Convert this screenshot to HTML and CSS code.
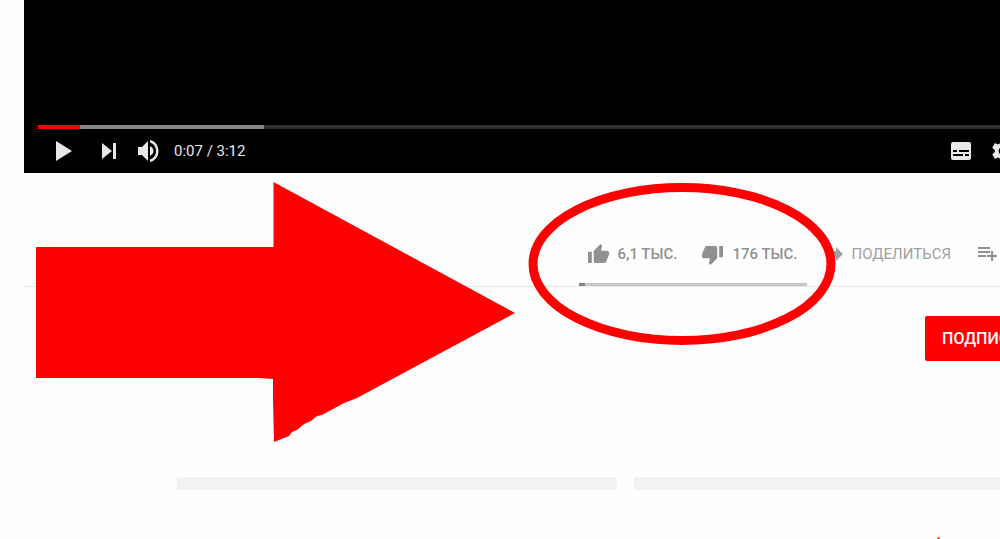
FILE: index.html
```
<!DOCTYPE html>
<html lang="ru">
<head>
    <meta charset="UTF-8">
    <title>Видео</title>
    <link rel="stylesheet" href="styles.css">
</head>
<body>
<div class="player">
    <input type="range" class="player-progress" min="0" max="192" value="7" aria-label="Перемотка">
    <div class="player-controls">
        <button type="button" class="icon-btn btn-play" aria-label="Смотреть">
            <svg width="16" height="20" viewBox="0 0 16 20"><path d="M0 0L16 10L0 20z"/></svg>
        </button>
        <button type="button" class="icon-btn btn-next" aria-label="Следующее">
            <svg width="14" height="16" viewBox="0 0 14 16"><path d="M0 0L10 8L0 16zM11 0h3v16h-3z"/></svg>
        </button>
        <button type="button" class="icon-btn btn-volume" aria-label="Звук">
            <svg width="21" height="22" viewBox="0 0 21 22"><path d="M0 7v8h4l6 6V1L4 7zM12 6v10c2-1 3.500-2.800 3.500-5S14 7 12 6zM12 0v2.500c3.500 1 6 4.400 6 8.500s-2.500 7.500-6 8.500V22c5-1 8.500-5.500 8.500-11S17 1 12 0z"/></svg>
        </button>
        <span class="player-time">0:07 / 3:12</span>
        <div class="player-right">
            <button type="button" class="icon-btn" aria-label="Субтитры">
                <svg width="20" height="18" viewBox="0 0 20 18"><path fill-rule="evenodd" d="M2 0h16a2 2 0 0 1 2 2v14a2 2 0 0 1-2 2H2a2 2 0 0 1-2-2V2a2 2 0 0 1 2-2zM2 8v2h4V8zM8 8v2h10V8zM2 12v2h10v-2zM14 12v2h4v-2z"/></svg>
            </button>
            <button type="button" class="icon-btn" aria-label="Настройки">
                <svg width="22" height="22" viewBox="2 2 20 20"><path d="M19.430 12.980c.04-.32.07-.64.07-.98s-.03-.66-.07-.98l2.110-1.650c.19-.15.24-.42.12-.64l-2-3.460c-.12-.22-.39-.3-.61-.22l-2.490 1c-.52-.4-1.080-.73-1.690-.98l-.38-2.650C14.460 2.180 14.250 2 14 2h-4c-.25 0-.46.18-.49.42l-.38 2.650c-.61.25-1.170.59-1.690.98l-2.490-1c-.23-.09-.49 0-.61.22l-2 3.460c-.13.22-.07.49.12.64l2.110 1.650c-.04.32-.07.65-.07.98s.03.66.07.98l-2.110 1.650c-.19.15-.24.42-.12.64l2 3.460c.12.22.39.3.61.22l2.490-1c.52.4 1.080.73 1.690.98l.38 2.650c.03.24.24.42.49.42h4c.25 0 .46-.18.49-.42l.38-2.650c.61-.25 1.170-.59 1.690-.98l2.490 1c.23.09.49 0 .61-.22l2-3.460c.12-.22.07-.49-.12-.64zM12 16a4 4 0 1 1 0-8 4 4 0 0 1 0 8z"/></svg>
            </button>
        </div>
    </div>
</div>
<div class="actions">
    <div class="rating">
        <div class="rating-buttons">
            <button type="button" class="action action-rate">
                <svg width="21" height="21" viewBox="1 1 22 22"><path d="M1 21h4V9H1zM23 10c0-1.100-.9-2-2-2h-6.310l.95-4.570.03-.32c0-.41-.17-.79-.44-1.060L14.170 1 7.590 7.590C7.220 7.950 7 8.450 7 9v10c0 1.100.9 2 2 2h9c.83 0 1.540-.5 1.840-1.220l3.020-7.050c.09-.23.14-.47.14-.73z"/></svg>
                <span>6,1 ТЫС.</span>
            </button>
            <button type="button" class="action action-rate">
                <svg width="21" height="21" viewBox="1 1 22 22"><path d="M15 3H6c-.83 0-1.540.5-1.840 1.220l-3.020 7.050c-.09.23-.14.47-.14.73v2c0 1.100.9 2 2 2h6.310l-.95 4.570-.03.32c0 .41.17.79.44 1.060L9.830 23l6.590-6.590c.36-.36.58-.86.58-1.410V5c0-1.100-.9-2-2-2zM19 3v12h4V3z"/></svg>
                <span>176 ТЫС.</span>
            </button>
        </div>
        <div class="rating-bar"><div class="rating-bar-value" style="width: 3%"></div></div>
    </div>
    <button type="button" class="action action-share">
        <svg width="10" height="14" viewBox="0 0 10 14"><path d="M3 0l7 7-7 7v-4H0V4h3z"/></svg>
        <span>ПОДЕЛИТЬСЯ</span>
    </button>
    <button type="button" class="action action-save" aria-label="Сохранить">
        <svg width="20" height="16" viewBox="0 0 20 16"><path d="M0 1h12v2H0zM0 5h12v2H0zM0 9h8v2H0zM13 5h2v4h4v2h-4v4h-2v-4H9V9h4z"/></svg>
    </button>
</div>
<div class="channel">
    <button type="button" class="subscribe">ПОДПИСАТЬСЯ</button>
</div>
<div class="placeholders">
    <div class="placeholder"></div>
    <div class="placeholder"></div>
</div>
<svg class="marks" width="1000" height="539" viewBox="0 0 1000 539" aria-hidden="true">
    <path class="mark-arrow" d="M36 247H273.500V182L515 313L357 398L344 403L322 415L317 416L311 421L304 424L297 430L292 432L289 436L274 442L273 400V379L258 378H36z"/>
    <ellipse class="mark-circle" cx="682" cy="264" rx="149" ry="76.500"/>
    <circle class="mark-arrow" cx="938.500" cy="538.500" r="1.200"/>
</svg>
</body>
</html>
```
FILE: styles.css
```
* {
    box-sizing: border-box;
}
body {
    position: relative;
    margin: 0;
    min-height: 100vh;
    overflow: hidden;
    background: #fefefe;
    font-family: Roboto, "Liberation Sans", sans-serif;
}
button {
    margin: 0;
    padding: 0;
    border: 0;
    background: none;
    font-family: inherit;
    cursor: pointer;
}
svg {
    display: block;
    flex: none;
    fill: currentColor;
}
/* player */
.player {
    margin-left: 24px;
    padding: 125px 0 0 14px;
    height: 173px;
    background: #000;
    color: #e8e8e8;
}
.player-progress {
    -webkit-appearance: none;
    appearance: none;
    display: block;
    width: 100%;
    height: 4px;
    margin: 0;
    background: linear-gradient(to right, #f00 42px, #868686 42px, #868686 226px, #303030 226px);
    cursor: pointer;
}
.player-progress::-webkit-slider-thumb {
    -webkit-appearance: none;
    width: 0;
    height: 0;
}
.player-controls {
    display: flex;
    align-items: center;
    height: 44px;
    padding-left: 18px;
}
.icon-btn {
    color: inherit;
}
.btn-next {
    margin-left: 30px;
}
.btn-volume {
    margin-left: 22px;
}
.player-time {
    margin-left: 15px;
    font-size: 15px;
    line-height: 20px;
}
.player-right {
    display: flex;
    align-items: center;
    gap: 21px;
    margin-left: auto;
    margin-right: -14px;
}
/* rating, share, save */
.actions {
    display: flex;
    justify-content: flex-end;
    align-items: flex-end;
    height: 114px;
    margin-left: 24px;
    padding-right: 2px;
    border-bottom: 1px solid #e8e8e8;
}
.action {
    display: flex;
    align-items: center;
    gap: 9px;
    height: 24px;
    color: #909090;
    font-size: 15px;
    line-height: 24px;
    white-space: nowrap;
}
.action-rate {
    font-weight: 500;
}
.rating {
    width: 228px;
}
.rating-buttons {
    display: flex;
    justify-content: space-between;
    padding: 0 9px 17px;
}
.rating-bar {
    height: 3px;
    background: #c8c8c8;
}
.rating-bar-value {
    height: 100%;
    background: #858585;
}
.action-share {
    margin: 0 27px 20px 26px;
    color: #a0a0a0;
}
.action-save {
    margin-bottom: 20px;
}
/* subscribe */
.channel {
    display: flex;
    justify-content: flex-end;
    height: 190px;
    margin-right: -76px;
    padding-top: 29px;
}
.subscribe {
    height: 45px;
    padding: 0 17px;
    border-radius: 2px;
    background: #f00;
    color: #fff;
    font-size: 16px;
    font-weight: 500;
}
.placeholders {
    display: grid;
    grid-template-columns: 1fr 1fr;
    gap: 17px;
    margin: 0 -74px 0 177px;
}
.placeholder {
    height: 13px;
    background: #f2f2f2;
}
/* marks drawn over the page */
.marks {
    position: absolute;
    top: 0;
    left: 0;
    pointer-events: none;
}
.mark-arrow {
    fill: #f00;
}
.mark-circle {
    fill: none;
    stroke: #f00;
    stroke-width: 9;
}
```
